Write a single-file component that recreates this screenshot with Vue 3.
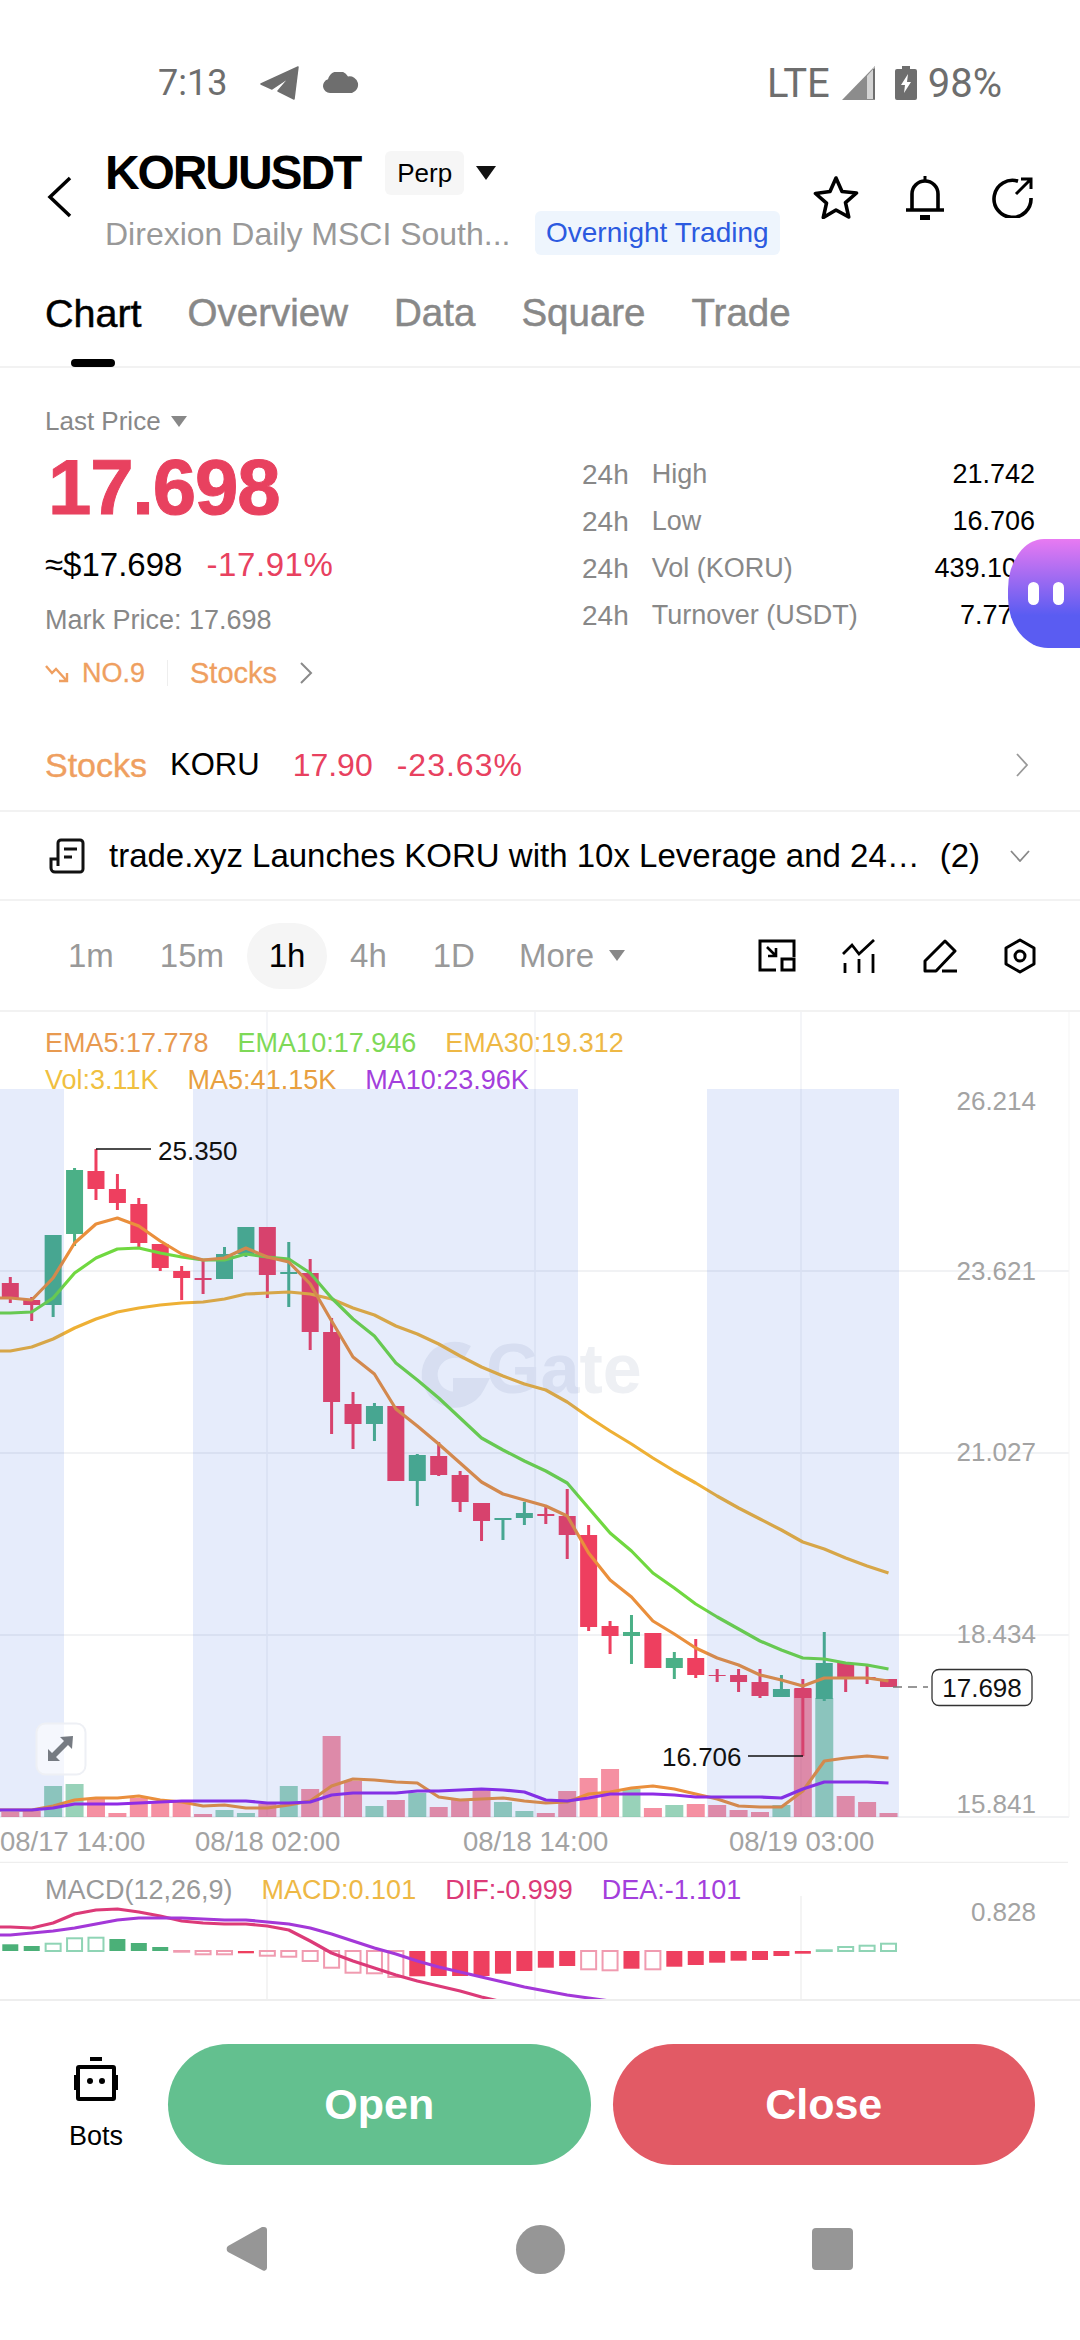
<template>
  <div class="page">
    <div class="status">
      <span class="clock">7:13</span>
      <svg class="st-plane" width="40" height="34" viewBox="0 0 40 34"><path d="M38 1 1 18 12 23 30 11 18 25 34 33Z" fill="#6e6e6e" stroke="#6e6e6e" stroke-linejoin="round" stroke-width="1.500" /></svg>
      <svg class="st-cloud" width="38" height="22" viewBox="0 0 38 22"><path d="M8 21a7 7 0 0 1-2-13.700A11 11 0 0 1 26 4.500a8.500 8.500 0 0 1 4 16.500Z" fill="#6e6e6e" /></svg>
      <span class="st-gap"></span>
      <span class="lte">LTE</span>
      <svg class="st-signal" width="33" height="34" viewBox="0 0 33 34"><path d="M33 0V34H0Z" fill="#8c8c8c" /><path d="M33 1 25 10V33H31V1Z" fill="#d4d4d4" /><path d="M32 3V33" stroke="#6e6e6e" stroke-width="2" /></svg>
      <svg class="st-batt" width="22" height="34" viewBox="0 0 22 34"><path d="M7 0h8v3h5a2 2 0 0 1 2 2v27a2 2 0 0 1-2 2H2a2 2 0 0 1-2-2V5a2 2 0 0 1 2-2h5Z" fill="#6e6e6e" /><path d="M13 8 6 19h4l-1 8 7-11h-4Z" fill="#fff" /></svg>
      <span class="pct">98%</span>
    </div>

    <header class="head">
      <svg class="back" width="26" height="42" viewBox="0 0 26 42"><path d="M23 2 3 21 23 40" fill="none" stroke="#000" stroke-width="3.500" /></svg>
      <div class="head-main">
        <div class="title-row">
          <h1>KORUUSDT</h1>
          <span class="perp">Perp</span>
          <i class="caret dark"></i>
        </div>
        <div class="sub-row">
          <span class="sub">Direxion Daily MSCI South...</span>
          <span class="night">Overnight Trading</span>
        </div>
      </div>
      <div class="head-icons">
        <svg width="46" height="44" viewBox="0 0 46 44"><path d="M23 3l6 13.500 14.500 1.500-11 9.700 3.200 14.300L23 35l-12.700 7.500 3.200-14.300-11-9.700L17 16.500Z" fill="none" stroke="#000" stroke-width="3.600" stroke-linejoin="round" /></svg>
        <svg width="40" height="46" viewBox="0 0 40 46"><path d="M7 35V20a13 13 0 0 1 26 0v15" fill="none" stroke="#000" stroke-width="3.600" /><path d="M1 36h38" stroke="#000" stroke-width="3.600" /><path d="M20 2v6" stroke="#000" stroke-width="3" /><rect x="15" y="41" width="10" height="5" /></svg>
        <svg width="44" height="42" viewBox="0 0 44 42"><path d="M27 5.200A18.500 18.500 0 1 0 40 22" fill="none" stroke="#000" stroke-width="3.600" /><path d="M25 18 39 4M30 3h10v10" fill="none" stroke="#000" stroke-width="3" /></svg>
      </div>
    </header>

    <nav class="tabs">
      <span v-for="(t, n) in tabs" :key="t" :class="['tab', { on: n === 0 }]">{{ t }}</span>
    </nav>

    <section class="summary">
      <div class="sum-left">
        <div class="last">Last Price <i class="caret grey"></i></div>
        <div class="big">17.698</div>
        <div class="approx"><span>≈$17.698</span><span class="red">-17.91%</span></div>
        <div class="mark">Mark Price: 17.698</div>
        <div class="rank">
          <svg width="24" height="20" viewBox="0 0 24 20"><path d="M1 3l6 7 4-4 10 11M22 10v8h-8" fill="none" stroke="#ef9f60" stroke-width="2.400" /></svg>
          <span class="no">NO.9</span>
          <i class="rank-sep"></i>
          <span class="rank-cat">Stocks</span>
          <svg class="rank-go" width="14" height="24" viewBox="0 0 14 24"><path d="M2 2l10 10L2 22" fill="none" stroke="#8a8a8a" stroke-width="2" /></svg>
        </div>
      </div>
      <div class="stats">
        <div v-for="s in stats" :key="s.label" class="stat">
          <span class="h24">24h</span>
          <span class="stat-label">{{ s.label }}</span>
          <span class="stat-val">{{ s.value }}</span>
        </div>
      </div>
      <div class="bubble"><i></i><i></i></div>
    </section>

    <div class="stock-row">
      <span class="orange">Stocks</span>
      <span class="koru">KORU</span>
      <span class="red p1">17.90</span>
      <span class="red p2">-23.63%</span>
      <svg class="go" width="13" height="24" viewBox="0 0 13 24"><path d="M1 1l10 11L1 23" fill="none" stroke="#999" stroke-width="1.800" /></svg>
    </div>

    <div class="news-row">
      <svg width="36" height="36" viewBox="0 0 36 36"><path d="M9 28V5a3 3 0 0 1 3-3h19a3 3 0 0 1 3 3v26a3 3 0 0 1-3 3H6a4 4 0 0 1-4-4v-9h7" fill="none" stroke="#111" stroke-width="3" /><path d="M15 11h13M15 19h8" stroke="#111" stroke-width="3" /></svg>
      <span class="news-text">trade.xyz Launches KORU with 10x Leverage and 24…</span>
      <span class="news-count">(2)</span>
      <svg class="news-down" width="20" height="12" viewBox="0 0 20 12"><path d="M1 1l9 10 9-10" fill="none" stroke="#888" stroke-width="1.800" /></svg>
    </div>

    <div class="interval-row">
      <span v-for="v in intervals" :key="v" :class="['iv', { on: v === '1h' }]">{{ v }}</span>
      <span class="iv more">More <i class="caret grey"></i></span>
      <div class="iv-icons">
        <svg width="38" height="33" viewBox="0 0 38 33"><path d="M18 31H2V2h34v16" fill="none" stroke="#000" stroke-width="3" /><rect x="24" y="20" width="12" height="11" fill="none" stroke="#000" stroke-width="3" /><path d="M9 8l9 9M18 9v8h-8" fill="none" stroke="#000" stroke-width="2.600" /></svg>
        <svg width="34" height="34" viewBox="0 0 34 34"><path d="M1 15 10 6l7 9L32 1" fill="none" stroke="#000" stroke-width="2.800" /><path d="M3 24v10M17 20v14M31 15v19" stroke="#000" stroke-width="2.800" /></svg>
        <svg width="36" height="34" viewBox="0 0 36 34"><path d="M23 2 33 12 14 32H3V22Z" fill="none" stroke="#000" stroke-width="3" stroke-linejoin="round" /><path d="M20 32h15" stroke="#000" stroke-width="3" /></svg>
        <svg width="32" height="36" viewBox="0 0 32 36"><path d="M16 2 30 10V26L16 34 2 26V10Z" fill="none" stroke="#000" stroke-width="3" stroke-linejoin="round" /><circle cx="16" cy="18" r="5" fill="none" stroke="#000" stroke-width="3" /></svg>
      </div>
    </div>

    <section class="chart">
      <div class="legend l1">
        <span class="c-ema5">EMA5:17.778</span><span class="c-ema10">EMA10:17.946</span><span class="c-ema30">EMA30:19.312</span>
      </div>
      <div class="legend l2">
        <span class="c-vol">Vol:3.11K</span><span class="c-ma5">MA5:41.15K</span><span class="c-ma10">MA10:23.96K</span>
      </div>
      <svg class="kline" width="1080" height="851" viewBox="0 1011 1080 851">
        <path v-for="y in gridY" :key="y" :d="`M0 ${y}H1069`" stroke="#f1f2f4" stroke-width="2" />
        <path v-for="x in gridX" :key="x" :d="`M${x} 1011V1816`" stroke="#f0f2f6" stroke-width="1.500" />
        <path d="M1069 1011V1816" stroke="#f5f5f5" />

        <g>
          <path d="M467 1352a25 25 0 1 0 10 33h-24" fill="none" stroke="#eef0f4" stroke-width="16" />
          <text x="486" y="1392" class="wm">Gate</text>
        </g>

        <rect v-for="(v, i) in vols" :key="'v' + i" :x="xAt(i) - 9" :y="v" width="18" :height="1816 - v" :fill="candles[i][0] ? '#4db287' : '#ee3f5f'" fill-opacity=".58" />

        <g v-for="(c, i) in candles" :key="'c' + i" :fill="c[0] ? '#4bb087' : '#ee3f5f'">
          <rect :x="xAt(i) - 1.500" :y="c[1]" width="3" :height="c[4] - c[1]" />
          <rect :x="xAt(i) - 8.500" :y="c[2]" width="17" :height="c[3] - c[2]" />
        </g>

        <polyline :points="line(ema30)" class="ln" stroke="#eeb035" />
        <polyline :points="line(ema10)" class="ln" stroke="#70d840" />
        <polyline :points="line(ema5)" class="ln" stroke="#ea8f3c" />
        <polyline :points="line(volMa5)" class="ln" stroke="#ea8f3c" />
        <polyline :points="line(volMa10)" class="ln" stroke="#8f2be6" />

        <rect v-for="b in bands" :key="b[0]" :x="b[0]" y="1088" :width="b[1] - b[0]" height="728" fill="#285ae1" fill-opacity=".118" />

        <path d="M96 1148H151" stroke="#111" stroke-width="1.300" />
        <text x="158" y="1159" class="tag">25.350</text>
        <path d="M748 1755H803" stroke="#111" stroke-width="1.300" />
        <text x="662" y="1765" class="tag">16.706</text>

        <path d="M893 1686H928" stroke="#777" stroke-width="1.500" stroke-dasharray="9 6" />
        <rect x="932" y="1668.500" width="100" height="36" rx="7" fill="#fff" stroke="#333" stroke-width="1.300" />
        <text x="982" y="1696" class="tag mid">17.698</text>

        <text v-for="p in prices" :key="p[0]" x="1036" :y="p[1]" class="axis">{{ p[0] }}</text>
        <text v-for="d in dates" :key="d[0]" :x="d[1]" y="1850" class="date">{{ d[0] }}</text>
        <path d="M0 1861.500H1068" stroke="#eeeeee" stroke-width="1.500" />

        <rect x="36.500" y="1722.500" width="49" height="51" rx="9" fill="#fff" fill-opacity=".6" stroke="#eef0f5" stroke-width="2" />
        <path d="M73 1735 60 1736 64 1740 52 1752 48 1748 48 1760 60 1760 56 1756 68 1744 72 1748Z" fill="#767b82" />
      </svg>
    </section>

    <section class="macd">
      <div class="legend l3">
        <span class="c-grey">MACD(12,26,9)</span><span class="c-ma5b">MACD:0.101</span><span class="c-dif">DIF:-0.999</span><span class="c-ma10">DEA:-1.101</span>
      </div>
      <svg width="1080" height="138" viewBox="0 1862 1080 138">
        <path v-for="x in gridX" :key="x" :d="`M${x} 1895V1999`" stroke="#f1f1f1" stroke-width="1.500" />
        <template v-for="(b, i) in macd" :key="'m' + i">
          <rect v-if="b[1]" :x="xAt(i) - 7.500" :y="Math.min(1950, 1950 + b[0])" width="15" :height="Math.abs(b[0])" fill="none" :stroke="b[0] < 0 ? '#8fd4b5' : '#f09bb0'" stroke-width="2" />
          <rect v-else :x="xAt(i) - 8" :y="Math.min(1950, 1950 + b[0])" width="16" :height="Math.abs(b[0])" :fill="b[0] < 0 ? '#4bb078' : '#ee3f5f'" />
        </template>
        <polyline :points="line(dif)" class="ln" stroke="#dc3a78" />
        <polyline :points="line(dea)" class="ln" stroke="#a338d8" />
        <text x="1036" y="1920" class="axis">0.828</text>
        <path d="M0 1999H1080" stroke="#eeeeee" stroke-width="2" />
      </svg>
    </section>

    <div class="actions">
      <div class="bots">
        <svg width="46" height="46" viewBox="0 0 46 46"><rect x="17" y="1" width="12" height="4" fill="#000" /><rect x="5" y="11" width="36" height="32" rx="1" fill="none" stroke="#000" stroke-width="4" /><rect x="1" y="19" width="3" height="15" fill="#000" /><rect x="42" y="19" width="3" height="15" fill="#000" /><circle cx="17" cy="25" r="3" fill="#000" /><circle cx="29" cy="25" r="3" fill="#000" /></svg>
        <span>Bots</span>
      </div>
      <button class="btn open">Open</button>
      <button class="btn close">Close</button>
    </div>

    <div class="sysnav">
      <svg width="42" height="46" viewBox="0 0 42 46"><path d="M38 1a3 3 0 0 1 3 3v38a3 3 0 0 1-5 2L2 26a4 4 0 0 1 0-6L36 1Z" fill="#969696" /></svg>
      <i class="sys-dot"></i>
      <i class="sys-sq"></i>
    </div>
  </div>
</template>

<script setup>
const tabs = ["Chart", "Overview", "Data", "Square", "Trade"];
const intervals = ["1m", "15m", "1h", "4h", "1D"];

const stats = [
  { label: "High", value: "21.742" },
  { label: "Low", value: "16.706" },
  { label: "Vol (KORU)", value: "439.10K" },
  { label: "Turnover (USDT)", value: "7.77M" }
];

const gridY = [1270, 1452, 1634, 1816];
const gridX = [267, 535, 801];
const bands = [[0, 64], [193, 578], [707, 899]];

const prices = [["26.214", 1109], ["23.621", 1279], ["21.027", 1460], ["18.434", 1642], ["15.841", 1812]];
const dates = [["08/17 14:00", 0], ["08/18 02:00", 195], ["08/18 14:00", 463], ["08/19 03:00", 729]];

// [up, high, bodyTop, bodyBottom, low] in page pixels
const candles = [
  [0, 1276, 1282, 1297, 1302], [0, 1296, 1299, 1304, 1320], [1, 1234, 1234, 1304, 1316],
  [1, 1167, 1169, 1233, 1245], [0, 1148, 1170, 1188, 1199], [0, 1173, 1188, 1202, 1209],
  [0, 1197, 1203, 1242, 1246], [0, 1243, 1243, 1267, 1270], [0, 1265, 1270, 1277, 1299],
  [0, 1260, 1277, 1279, 1293], [1, 1246, 1253, 1278, 1278], [1, 1226, 1226, 1253, 1256],
  [0, 1226, 1226, 1274, 1297], [1, 1241, 1271, 1273, 1306], [0, 1258, 1272, 1331, 1349],
  [0, 1317, 1331, 1401, 1433], [0, 1391, 1403, 1423, 1448], [1, 1402, 1405, 1423, 1440],
  [0, 1405, 1405, 1480, 1480], [1, 1453, 1454, 1480, 1505], [0, 1441, 1455, 1474, 1475],
  [0, 1470, 1474, 1501, 1511], [0, 1502, 1502, 1520, 1540], [1, 1517, 1517, 1519, 1539],
  [1, 1501, 1512, 1517, 1524], [0, 1506, 1513, 1515, 1523], [0, 1488, 1515, 1534, 1558],
  [0, 1524, 1534, 1626, 1630], [0, 1620, 1625, 1635, 1653], [1, 1614, 1631, 1635, 1663],
  [0, 1632, 1632, 1667, 1667], [1, 1651, 1657, 1667, 1678], [0, 1638, 1657, 1674, 1677],
  [0, 1668, 1674, 1675, 1681], [0, 1668, 1674, 1681, 1691], [0, 1668, 1681, 1695, 1697],
  [1, 1674, 1688, 1696, 1696], [0, 1678, 1687, 1697, 1755], [1, 1631, 1662, 1698, 1700],
  [0, 1662, 1662, 1676, 1691], [0, 1663, 1676, 1677, 1683], [0, 1678, 1678, 1686, 1686]
];

const vols = [1811, 1810, 1785, 1783, 1798, 1812, 1797, 1802, 1800, 1813, 1809, 1812, 1803, 1785, 1788, 1735, 1780, 1805, 1799, 1792, 1806, 1798, 1788, 1801, 1810, 1812, 1790, 1777, 1768, 1788, 1807, 1804, 1803, 1804, 1809, 1811, 1804, 1688, 1697, 1795, 1801, 1812];

const ema5 = [1297, 1299, 1277, 1242, 1223, 1217, 1225, 1240, 1253, 1259, 1257, 1247, 1256, 1261, 1283, 1320, 1356, 1373, 1408, 1425, 1443, 1462, 1481, 1493, 1499, 1505, 1515, 1552, 1579, 1596, 1620, 1633, 1647, 1657, 1664, 1674, 1679, 1685, 1677, 1677, 1677, 1680];
const ema10 = [1312, 1311, 1297, 1272, 1257, 1248, 1247, 1252, 1256, 1259, 1259, 1253, 1256, 1258, 1272, 1297, 1318, 1335, 1362, 1379, 1397, 1417, 1437, 1449, 1460, 1470, 1482, 1507, 1532, 1550, 1572, 1587, 1603, 1616, 1628, 1640, 1649, 1657, 1658, 1662, 1664, 1668];
const ema30 = [1350, 1346, 1338, 1327, 1318, 1311, 1307, 1304, 1302, 1301, 1298, 1293, 1292, 1291, 1293, 1298, 1307, 1314, 1325, 1333, 1343, 1355, 1366, 1375, 1383, 1389, 1401, 1416, 1430, 1443, 1457, 1470, 1482, 1495, 1507, 1518, 1529, 1541, 1548, 1557, 1565, 1572];
const volMa5 = [1809, 1809, 1805, 1799, 1797, 1797, 1795, 1799, 1801, 1805, 1804, 1807, 1807, 1804, 1800, 1785, 1778, 1779, 1781, 1782, 1796, 1799, 1798, 1797, 1800, 1802, 1801, 1793, 1791, 1787, 1785, 1788, 1793, 1798, 1805, 1806, 1806, 1790, 1760, 1757, 1755, 1757];
const volMa10 = [1809, 1809, 1807, 1803, 1803, 1803, 1802, 1801, 1800, 1800, 1800, 1800, 1802, 1802, 1801, 1794, 1792, 1792, 1792, 1790, 1790, 1789, 1788, 1789, 1791, 1799, 1800, 1797, 1793, 1793, 1793, 1794, 1796, 1796, 1796, 1796, 1797, 1788, 1781, 1781, 1781, 1782];

// [height from zero line, hollow]
const macd = [
  [-6.7, 0], [-5, 0], [-7.3, 1], [-12.7, 1], [-13.3, 1], [-12, 0], [-8, 0], [-4, 0], [0.7, 1], [3.3, 1], [3.3, 1],
  [2.3, 0], [4.7, 1], [5.7, 1], [10, 1], [16.7, 1], [21.7, 1], [22.3, 1], [26, 1], [25.3, 0], [25, 0], [25, 0],
  [25, 0], [22.7, 0], [20, 0], [16.7, 0], [15, 0], [18.3, 1], [19.3, 1], [17.7, 0], [18.3, 1], [15.7, 0], [14, 0],
  [11.7, 0], [9.7, 0], [9, 0], [5, 0], [2.7, 0], [-0.7, 1], [-4, 1], [-5.3, 1], [-7.3, 1]
];
const dif = [1926, 1927, 1922, 1913, 1909, 1908, 1911, 1915, 1920, 1922, 1923, 1923, 1925, 1929, 1940, 1952, 1960, 1967, 1974, 1980, 1985, 1990, 1996, 2001];
const dea = [1934, 1932, 1930, 1927, 1923, 1919, 1917, 1917, 1917, 1918, 1919, 1919, 1921, 1923, 1927, 1933, 1940, 1947, 1953, 1960, 1966, 1971, 1976, 1981, 1986, 1990, 1994, 1997, 2000];

const xAt = (i) => 10.3 + 21.42 * i;
const line = (ys) => `0,${ys[0]} ` + ys.map((y, i) => `${xAt(i).toFixed(1)},${y}`).join(" ");
</script>

<style>
body {
  margin: 0;
  background: #fff;
}
</style>

<style scoped>
.page {
  position: relative;
  width: 1080px;
  height: 2340px;
  overflow: hidden;
  background: #fff;
  color: #000;
  font-family: "Liberation Sans", Arial, sans-serif;
}

i {
  display: inline-block;
  font-style: normal;
}

.caret {
  width: 0;
  height: 0;
  border-left: 10px solid transparent;
  border-right: 10px solid transparent;
}

.caret.dark {
  border-top: 14px solid #111;
}

.caret.grey {
  border-left-width: 8px;
  border-right-width: 8px;
  border-top: 11px solid #888;
}

.red {
  color: #e8415f;
}

.orange {
  color: #ef9f60;
}

/* status bar */
.status {
  display: flex;
  align-items: center;
  height: 133px;
  padding: 33px 78px 0 158px;
  box-sizing: border-box;
  color: #6e6e6e;
  font-family: Roboto, sans-serif;
  font-size: 36px;
}

.st-plane {
  margin-left: 33px;
}

.st-cloud {
  margin-left: 22px;
}

.st-gap {
  flex: 1;
}

.lte {
  font-size: 40px;
}

.st-signal {
  margin-left: 12px;
}

.st-batt {
  margin-left: 20px;
}

.pct {
  margin-left: 11px;
  font-size: 40px;
}

/* header */
.head {
  display: flex;
  height: 122px;
  padding: 15px 45px 0 47px;
  box-sizing: border-box;
}

.back {
  margin-top: 28px;
  margin-right: 32px;
}

.head-main {
  flex: 1;
}

.title-row {
  display: flex;
  align-items: center;
  height: 50px;
}

h1 {
  margin: 0;
  font-size: 48px;
  font-weight: 700;
  letter-spacing: -2.100px;
  line-height: 50px;
}

.perp {
  display: flex;
  align-items: center;
  height: 44px;
  margin-left: 25px;
  padding: 0 12px;
  border-radius: 6px;
  background: #f6f6f6;
  font-size: 26px;
}

.title-row .caret {
  margin-left: 12px;
}

.sub-row {
  display: flex;
  align-items: center;
  height: 44px;
  margin-top: 13px;
}

.sub {
  width: 430px;
  padding-top: 2px;
  color: #999;
  font-size: 32px;
  white-space: nowrap;
}

.night {
  padding: 0 11px;
  border-radius: 6px;
  background: #eef5fd;
  color: #2b5ae0;
  font-size: 28px;
  line-height: 44px;
}

.head-icons {
  display: flex;
  align-items: center;
  gap: 46px;
  height: 46px;
  margin-top: 26px;
}

/* tabs */
.tabs {
  display: flex;
  gap: 46px;
  height: 113px;
  padding: 36px 0 0 45px;
  box-sizing: border-box;
  border-bottom: 2px solid #f2f2f2;
}

.tab {
  position: relative;
  height: 44px;
  color: #888;
  font-size: 38.500px;
  font-weight: 400;
  line-height: 44px;
  -webkit-text-stroke: 0.5px currentColor;
}

.tab.on {
  color: #000;
  font-size: 39.500px;
}

.tab.on::after {
  content: "";
  position: absolute;
  left: 26px;
  top: 68px;
  width: 44px;
  height: 8px;
  border-radius: 4px;
  background: #000;
}

/* summary */
.summary {
  position: relative;
  display: flex;
  justify-content: space-between;
  height: 352px;
  padding: 36px 45px 0;
  box-sizing: border-box;
}

.last {
  display: flex;
  align-items: center;
  gap: 10px;
  color: #888;
  font-size: 26px;
  line-height: 34px;
}

.big {
  margin-top: 9px;
  margin-left: 3px;
  color: #e8415f;
  font-size: 78px;
  font-weight: 700;
  letter-spacing: -1.200px;
  line-height: 80px;
  -webkit-text-stroke: 1px currentColor;
}

.approx {
  display: flex;
  gap: 24px;
  margin-top: 18px;
  font-size: 33px;
  line-height: 40px;
}

.approx .red {
  letter-spacing: 0.6px;
}

.mark {
  margin-top: 18px;
  color: #888;
  font-size: 27px;
  line-height: 34px;
}

.rank {
  display: flex;
  align-items: center;
  margin-top: 19px;
  color: #ef9f60;
  font-size: 27px;
  line-height: 34px;
  -webkit-text-stroke: 0.3px currentColor;
}

.no {
  margin-left: 13px;
}

.rank-sep {
  width: 1px;
  height: 26px;
  margin: 0 22px;
  background: #eee;
}

.rank-cat {
  font-size: 29px;
}

.rank-go {
  margin-left: 22px;
}

.stats {
  width: 453px;
  margin-top: 47px;
}

.stat {
  display: flex;
  height: 47px;
  align-items: center;
  color: #888;
  font-size: 27px;
}

.h24 {
  font-size: 28px;
}

.stat-label {
  flex: 1;
  margin-left: 23px;
}

.stat-val {
  color: #000;
}

.bubble {
  position: absolute;
  top: 171px;
  right: 0;
  display: flex;
  align-items: center;
  gap: 14px;
  width: 72px;
  height: 109px;
  padding-left: 20px;
  box-sizing: border-box;
  border-radius: 36px 0 0 40px / 50px 0 0 50px;
  background: linear-gradient(#e87af2, #5a5cf2 70%);
}

.bubble i {
  width: 11px;
  height: 23px;
  border-radius: 6px;
  background: #fff;
}

/* rows */
.stock-row,
.news-row {
  display: flex;
  align-items: center;
  box-sizing: border-box;
  padding: 0 50px 0 45px;
  border-bottom: 2px solid #f2f2f2;
}

.stock-row {
  height: 92px;
  font-size: 32px;
}

.stock-row .orange {
  font-size: 34px;
  -webkit-text-stroke: 0.4px currentColor;
}

.koru {
  margin-left: 23px;
  font-size: 31px;
}

.p1 {
  margin-left: 33px;
}

.p2 {
  margin-left: 24px;
  letter-spacing: 1px;
}

.go {
  margin-left: auto;
  margin-right: 1px;
}

.news-row {
  height: 89px;
  padding-left: 49px;
  font-size: 33px;
}

.news-text {
  margin-left: 24px;
  white-space: nowrap;
}

.news-count {
  margin-left: auto;
}

.news-down {
  margin-left: 30px;
}

.interval-row {
  display: flex;
  align-items: center;
  height: 111px;
  padding: 0 44px 0 45px;
  box-sizing: border-box;
  border-bottom: 2px solid #f2f2f2;
  color: #999;
  font-size: 33px;
}

.iv {
  padding: 0 23px;
  text-align: center;
  line-height: 66px;
}

.iv.on {
  box-sizing: border-box;
  width: 80px;
  padding: 0;
  color: #000;
  border-radius: 33px;
  background: #f5f5f5;
}

.more {
  display: flex;
  align-items: center;
  gap: 15px;
  padding-left: 21px;
}

.iv-icons {
  display: flex;
  align-items: center;
  gap: 46px;
  margin-left: auto;
}

/* chart */
.chart,
.macd {
  position: relative;
}

.chart svg,
.macd svg {
  display: block;
}

.legend {
  position: absolute;
  left: 45px;
  z-index: 1;
  display: flex;
  gap: 29px;
  font-size: 27px;
  line-height: 34px;
  white-space: nowrap;
}

.l1 {
  top: 14px;
}

.l2 {
  top: 51px;
}

.l3 {
  top: 10px;
}

.c-ema5 {
  color: #e89a50;
}

.c-ema10 {
  color: #7ed957;
}

.c-ema30 {
  color: #eeb845;
}

.c-vol {
  color: #f0c040;
}

.c-ma5 {
  color: #e8a040;
}

.c-ma5b {
  color: #eeb845;
}

.c-ma10 {
  color: #a33fdc;
}

.c-dif {
  color: #dc3a78;
}

.c-grey {
  color: #999;
}

.ln {
  fill: none;
  stroke-width: 3.200;
  stroke-linejoin: round;
}

.wm {
  fill: #eef0f4;
  font-size: 70px;
  font-weight: 700;
}

.tag {
  fill: #111;
  font-size: 26px;
}

.tag.mid {
  text-anchor: middle;
}

.axis {
  fill: #a3a3a3;
  font-size: 26px;
  text-anchor: end;
}

.date {
  fill: #a3a3a3;
  font-size: 27.500px;
}

/* bottom */
.actions {
  display: flex;
  gap: 22px;
  height: 191px;
  padding: 43px 45px 0 168px;
  box-sizing: border-box;
  position: relative;
}

.bots {
  position: absolute;
  left: 68px;
  top: 55px;
  width: 56px;
  display: flex;
  flex-direction: column;
  align-items: center;
  gap: 19px;
  font-size: 27px;
}

.btn {
  flex: 1;
  height: 121px;
  border: 0;
  border-radius: 61px;
  color: #fff;
  font-family: inherit;
  font-size: 43px;
  font-weight: 700;
}

.open {
  background: #63c08f;
}

.close {
  background: #e25a65;
}

.sysnav {
  display: flex;
  align-items: center;
  height: 150px;
  padding: 0 0 36px 226px;
  box-sizing: border-box;
}

.sys-dot {
  width: 49px;
  height: 49px;
  margin-left: 248px;
  border-radius: 50%;
  background: #969696;
}

.sys-sq {
  width: 41px;
  height: 42px;
  margin-left: 247px;
  border-radius: 4px;
  background: #969696;
}
</style>
